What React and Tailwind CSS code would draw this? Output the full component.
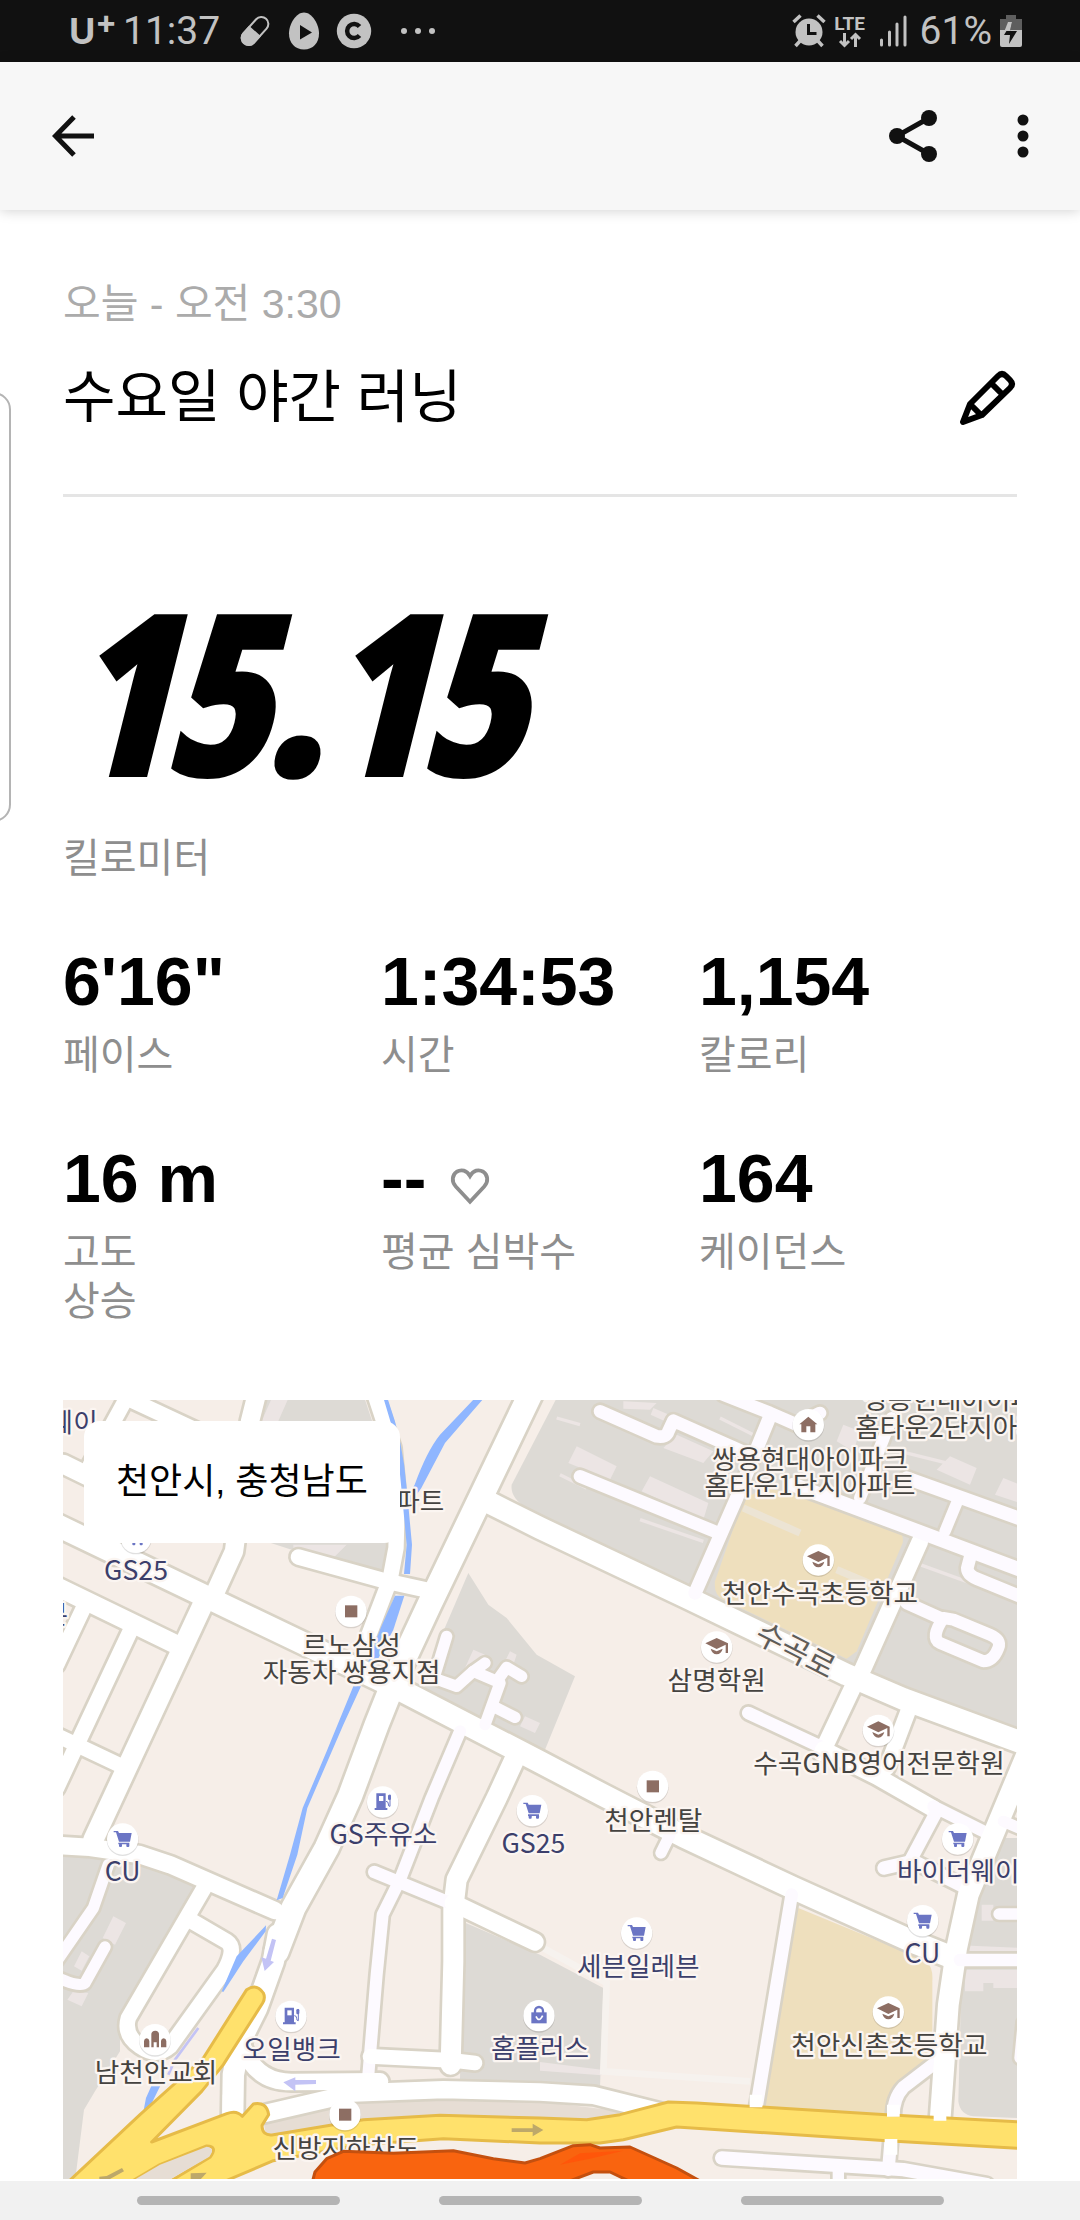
import React from "react";

const STATS = [
  { value: "6'16\"", label: "페이스" },
  { value: "1:34:53", label: "시간" },
  { value: "1,154", label: "칼로리" },
  { value: "16 m", label: "고도 상승", narrow: true },
  { value: "--", label: "평균 심박수", heart: true },
  { value: "164", label: "케이던스" },
];

function StatusBar() {
  return (
    <div className="flex h-[62px] items-center justify-between bg-[#111111] pl-[69px] pr-[58px] font-['Roboto',sans-serif] text-[39px] leading-[62px] text-[#c2c2c2]">
      <div className="flex items-center">
        <span className="flex w-[54px] items-start font-['Inter',sans-serif] text-[36px] font-bold leading-[42px]">
          U<span className="text-[32px] leading-[24px]">+</span>
        </span>
        <span>11:37</span>
        <svg className="ml-[18px] h-[34px] w-[34px]" viewBox="0 0 34 34" aria-hidden="true">
          <g transform="rotate(42 17 17)">
            <rect x="10" y="0.5" width="14" height="33" rx="7" fill="none" stroke="#c2c2c2" strokeWidth="2" />
            <path d="M9 17h16v10a8 7 0 0 1-16 0z" fill="#c2c2c2" />
          </g>
        </svg>
        <svg className="ml-4 h-[38px] w-[32px]" viewBox="0 0 32 38" aria-hidden="true">
          <path d="M16 .5C24 .5 31 12 31 21.500S25 37.500 16 37.500 1 31 1 21.500 8 .5 16 .5z" fill="#c2c2c2" />
          <path d="M12 13l12 7.500-12 7z" fill="#111" />
        </svg>
        <svg className="ml-4 h-[36px] w-[36px]" viewBox="0 0 36 36" aria-hidden="true">
          <circle cx="18" cy="18" r="17.200" fill="#c2c2c2" />
          <path d="M23.500 13.500a7 7 0 1 0 0 9" fill="none" stroke="#111" strokeWidth="4.500" />
        </svg>
        <svg className="ml-[28px] h-2 w-[36px]" viewBox="0 0 36 8" aria-hidden="true">
          <g fill="#c2c2c2">
            <circle cx="4" cy="4" r="3" />
            <circle cx="18" cy="4" r="3" />
            <circle cx="32" cy="4" r="3" />
          </g>
        </svg>
      </div>
      <div className="flex items-center">
        <svg className="h-[34px] w-[34px]" viewBox="0 0 34 34" aria-hidden="true">
          <circle cx="17" cy="18" r="13.500" fill="#c2c2c2" />
          <path d="M1.500 8l7-6.500M32.500 8l-7-6.500M8 27l-4.500 5M26 27l4.500 5" stroke="#c2c2c2" strokeWidth="3.500" />
          <path d="M16.500 10v9.500h8" fill="none" stroke="#111" strokeWidth="3" />
        </svg>
        <div className="ml-2 flex w-[32px] flex-col items-center">
          <span className="text-[19px] font-bold leading-[17px]">LTE</span>
          <svg className="h-[16px] w-[24px]" viewBox="0 0 24 16" aria-hidden="true">
            <path d="M6.500 1v12M2 9l4.500 4.500L11 9M17.500 15V3M13 7l4.500-4.500L22 7" fill="none" stroke="#c2c2c2" strokeWidth="3" />
          </svg>
        </div>
        <svg className="ml-3 h-[32px] w-[30px]" viewBox="0 0 30 32" aria-hidden="true">
          <path d="M3.500 25v5M11.500 17v13M19 9v21M27 2v28" stroke="#c2c2c2" strokeWidth="3" strokeLinecap="round" />
        </svg>
        <span className="ml-3">61%</span>
        <svg className="ml-2 h-[34px] w-[22px]" viewBox="0 0 22 34" aria-hidden="true">
          <path d="M6 1h10v4h6v11H0V5h6z" fill="#5e5e5e" />
          <path d="M0 16h22v15a2 2 0 0 1-2 2H2a2 2 0 0 1-2-2z" fill="#c2c2c2" />
          <path d="M12 8l-2 9h7l-8 13 1-9H4z" fill="#111" />
          <path d="M12 8l-2 9H4.500L8 8z" fill="#c2c2c2" />
        </svg>
      </div>
    </div>
  );
}

function AppBar() {
  return (
    <header className="relative flex h-[148px] items-center justify-between bg-[#f7f7f7] pl-[50px] pr-[45px] shadow-[0_1px_12px_rgba(0,0,0,0.18)]">
      <button type="button" aria-label="뒤로">
        <svg className="h-12 w-12" viewBox="0 0 48 48">
          <path d="M24 5L5.500 24 24 43M5.500 24H44" fill="none" stroke="#111" strokeWidth="5" />
        </svg>
      </button>
      <div className="flex items-center gap-[74px]">
        <button type="button" aria-label="공유">
          <svg className="h-[54px] w-12" viewBox="0 0 48 54">
            <path d="M40 9L8 27l32 18" fill="none" stroke="#111" strokeWidth="5" />
            <circle cx="40" cy="9" r="8" fill="#111" />
            <circle cx="8" cy="27" r="8" fill="#111" />
            <circle cx="40" cy="45" r="8" fill="#111" />
          </svg>
        </button>
        <button type="button" aria-label="더보기">
          <svg className="h-12 w-6" viewBox="0 0 24 48">
            <g fill="#111">
              <circle cx="12" cy="8" r="5.500" />
              <circle cx="12" cy="24" r="5.500" />
              <circle cx="12" cy="40" r="5.500" />
            </g>
          </svg>
        </button>
      </div>
    </header>
  );
}

/* Streets: [centre line, width, tint]. All outlines are drawn before all fills so junctions open up. */
const W = "#ffffff";
const L = "#fdfaff";
const ROADS = [
  ["M590 20L570 100 530 430 522 490 465 615", 55, W],
  ["M9 228L300 370", 56, W],
  ["M205 20L90 230", 44, W],
  ["M190 25L480 160", 46, W],
  ["M-10 411L450 632 1010 900 1440 1122 1630 1222 1870 1345 2200 1500 2560 1662 2680 1710", 66, W],
  ["M-10 596L345 768", 56, W],
  ["M440 625L277 975 100 1355", 60, W],
  ["M75 650L-10 830", 46, W],
  ["M215 720L60 1050 -10 1200", 46, W],
  ["M-10 1042L180 1132", 44, W],
  ["M1420 0L1108 650 1010 860 950 1010 870 1225 800 1380 700 1560 650 1690", 72, W],
  ["M945 20L998 180 1012 330 1008 480 990 575 925 745", 46, W],
  ["M715 507L980 580 1110 608", 46, W],
  ["M1290 345L1440 420 1880 628 2360 860 2530 933 2880 1062", 65, W],
  ["M1200 1030L1115 1230 1020 1475 968 1580 950 1760 925 2060", 36, L],
  ["M1370 1100L1310 1230 1190 1475 1180 1560 1180 1720 1172 2030", 60, W],
  ["M943 1452L1170 1545", 38, L],
  ["M1180 1545L1425 1662", 52, W],
  ["M930 2005L1175 2017 1245 2025", 44, W],
  ["M655 1640L640 1720 590 1860 540 1960 520 2060 518 2185", 64, W],
  ["M550 1980Q590 2085 700 2082L960 2080", 50, W],
  ["M600 2180L880 2115 1150 2105 1440 2112 1600 2122 1800 2172", 52, W],
  ["M-10 1372L90 1378 240 1400 330 1430 645 1568", 52, W],
  ["M435 1495L205 1890Q190 1940 240 1975 290 2010 330 1975L495 1745Q530 1680 500 1660L400 1602", 46, W],
  ["M145 1430L100 1560 -10 1720", 34, L],
  ["M135 1677L75 1785Q60 1800 -10 1768", 34, L],
  ["M2195 1520L2088 2165", 38, L],
  ["M2625 2025L2530 2098Q2500 2130 2500 2185", 38, L],
  ["M2493 2250L2485 2345", 38, L],
  ["M1985 2310L2530 2345 2780 2390", 40, L],
  ["M2335 2345V2390", 34, L],
  ["M2580 460L2410 840 2375 905 2285 1095", 50, W],
  ["M2550 955L2480 1140", 46, W],
  ["M2065 975L2290 1080", 38, L],
  ["M2290 1085L2450 1165 2620 1262", 50, W],
  ["M2620 1255L2790 1340", 36, L],
  ["M2630 1270L2550 1420", 38, L],
  ["M2472 1440L2560 1420 2710 1495", 40, L],
  ["M2900 1100L2812 1310 2725 1520 2690 1680 2665 1850 2640 2200", 62, W],
  ["M2830 1300L2890 1325", 34, L],
  ["M1830 1340L1803 1395", 34, L],
  ["M2817 1578H2890", 34, L],
  ["M2700 1716H2890", 38, L],
  ["M2890 1905L2880 2010", 34, L],
  ["M1160 745L1125 860", 34, L],
  ["M1120 870L1190 895 1240 850 1275 825", 34, L],
  ["M1240 850L1310 880 1340 838 1385 865", 34, L],
  ["M1320 885L1275 1010", 34, L],
  ["M1300 955L1365 988", 34, L],
  ["M1620 70L1790 145Q1820 150 1825 130L1840 98 2080 205", 38, L],
  ["M1560 265L1975 435", 38, L],
  ["M2130 85L2030 330 1905 615", 40, L],
  ["M1990 20L2130 75 2210 110 2280 75", 38, L],
  ["M2495 90L2400 330", 36, L],
  ["M2200 290L2580 432 2880 545", 42, L],
  ["M2540 270L2880 392", 40, L],
  ["M2690 345L2655 430", 34, L],
  ["M2735 490L2722 540Q2722 560 2750 572L2880 625", 38, L],
  ["M2540 645L2640 690", 38, L],
  ["M2650 690Q2610 750 2640 765L2770 820Q2800 820 2815 780 2825 755 2790 740L2680 695Z", 36, L],
];

const HALO = "#fbf5f1";
const BROWN = "#8d6e63";
const BLUE = "#6b75c4";

const LABELS = [
  ["웨이", 113, 132, "end", "b"],
  ["본", 24, 708, "end", "b"],
  ["GS25", 228, 575, "middle", "b"],
  ["파트", 1153, 370, "end", "d"],
  ["르노삼성", 875, 800, "middle", "d"],
  ["자동차 쌍용지점", 875, 881, "middle", "d"],
  ["쌍용현대아이파크", 2410, 64, "start", "d"],
  ["홈타운2단지아파트", 2386, 146, "start", "d"],
  ["쌍용현대아이파크", 2250, 242, "middle", "d"],
  ["홈타운1단지아파트", 2250, 320, "middle", "d"],
  ["천안수곡초등학교", 2280, 646, "middle", "d"],
  ["삼명학원", 1970, 906, "middle", "d"],
  ["수곡GNB영어전문학원", 2457, 1156, "middle", "d"],
  ["천안렌탈", 1780, 1325, "middle", "d"],
  ["CU", 188, 1478, "middle", "b"],
  ["GS주유소", 970, 1369, "middle", "b"],
  ["GS25", 1420, 1395, "middle", "b"],
  ["바이더웨이", 2511, 1480, "start", "b"],
  ["CU", 2587, 1726, "middle", "b"],
  ["세븐일레븐", 1735, 1764, "middle", "b"],
  ["홈플러스", 1440, 2010, "middle", "b"],
  ["천안신촌초등학교", 2488, 2002, "middle", "d"],
  ["오일뱅크", 695, 2012, "middle", "b"],
  ["남천안교회", 288, 2083, "middle", "d"],
  ["신방지하차도", 858, 2311, "middle", "d"],
];

const PINS = [
  ["cart", 228, 448],
  ["square", 873, 670],
  ["square", 1778, 1195],
  ["square", 855, 2180],
  ["home", 2245, 110],
  ["grad", 2275, 516],
  ["grad", 1970, 777],
  ["grad", 2455, 1027],
  ["grad", 2485, 1872],
  ["cart", 188, 1353],
  ["cart", 1417, 1268],
  ["cart", 2693, 1353],
  ["cart", 2588, 1598],
  ["cart", 1730, 1635],
  ["fuel", 968, 1242],
  ["fuel", 693, 1885],
  ["bag", 1437, 1883],
  ["church", 285, 1955],
];

function Glyph({ kind }) {
  switch (kind) {
    case "square":
      return <rect x="-18" y="-18" width="37" height="36" fill={BROWN} />;
    case "home":
      return <path d="M0-24l27 23h-6v24H6V5H-6v18h-15V-1h-6z" fill={BROWN} />;
    case "grad":
      return (
        <g fill={BROWN}>
          <path d="M-34-11L0-27 34-11V18H27V-7L0 6z" />
          <path d="M-18 5L0 13 18 5Q14 21 0 22-14 21-18 5z" />
        </g>
      );
    case "cart":
      return (
        <g fill={BLUE}>
          <path d="M-27-24h13l3 6h38l-5 26h-33l-9-28h-7zM-13 11h33v5h-33z" />
          <rect x="-11" y="14" width="9" height="10" rx="3" />
          <rect x="11" y="14" width="9" height="10" rx="3" />
        </g>
      );
    case "fuel":
      return (
        <g>
          <path d="M-19-26H9V18h5v6h-38v-6h5z" fill={BLUE} />
          <rect x="-11" y="-18" width="13" height="15" fill="#fff" />
          <path d="M10-2q7 0 7 8t5 7V-22" fill="none" stroke={BLUE} strokeWidth="3" />
          <rect x="16" y="-22" width="9" height="16" rx="4" fill={BLUE} />
        </g>
      );
    case "bag":
      return (
        <g>
          <path d="M-12-8v-6a12 12 0 0 1 24 0v6" fill="none" stroke={BLUE} strokeWidth="7" />
          <path d="M-23-10h46v33h-46z" fill={BLUE} />
          <path d="M-9 2Q0 22 11 0" fill="none" stroke="#fff" strokeWidth="5" />
        </g>
      );
    default:
      return (
        <path
          d="M-11-16Q-11-26 1-27 12-26 12-16V23H5V8H-4V23H-11zM-33 4Q-32-4-25-4T-17 4V23H-33zM18 4Q19-4 26-4T34 4V23H18z"
          fill={BROWN}
        />
      );
  }
}

function RouteMap() {
  return (
    <svg className="block h-auto w-full" viewBox="9 36 2862 2337" role="img" aria-label="러닝 경로 지도">
      <rect width="2900" height="2400" fill="#f6eee8" />

      <g fill="#dddad5">
        <path d="M618 20H910L940 110H595zM555 440H1000L970 552 830 510 690 484z" />
        <path d="M1225 555L1285 650 1340 690 1430 800 1545 865 1455 1085 1090 905 1150 730z" />
        <path d="M1490 30H2880V1030L2430 862 1400 360Q1350 330 1355 290z" />
        <path d="M1205 1600L1440 1700 1630 1800 1620 2100 1200 2075z" />
        <path d="M-10 1398L85 1405 250 1430 420 1500 180 1900V1990L105 2110 72 2165 45 2380H-10z" />
        <path d="M2800 1350H2880V1690H2720zM2705 1740H2880V2190L2740 2185Q2700 2180 2695 2140z" />
      </g>
      <g fill="#ece5e4">
        <path d="M640 20H690L650 110H600zM700 470H860L820 510H700z" />
        <path d="M1550 175L1670 235 1650 275 1525 225zM1770 265L1945 345 1930 395 1745 310zM1850 140L1960 190 1930 225 1810 180z" />
        <path d="M1690 40L1790 45 1770 65 1690 62zM1780 60L1850 90 1838 110 1772 80z" />
        <path d="M2670 205L2750 240 2730 290 2630 245zM2830 270L2880 290V345L2805 320zM2350 110L2400 130 2380 190 2330 160z" />
        <path d="M1240 785L1275 800 1260 840 1215 840zM1350 790L1370 800 1360 830 1335 820zM1395 985L1440 1005 1425 1035 1380 1015z" />
        <path d="M160 1585L198 1605 165 1670 128 1650zM65 1690L88 1705 65 1748 42 1735zM40 1810L85 1815 65 1855 22 1835z" />
        <path d="M2715 1745H2871V1800H2800V1785H2770V1810H2715zM1440 2022L1625 2045V2062L1440 2048z" />
        <path d="M2765 1550H2800V1598H2765zM2700 1672L2880 1680V1695H2700z" />
      </g>
      <path d="M1490 90L1560 110M1500 260L1580 300M1740 395L1930 460M1980 90L2080 140M2580 530L2871 635M2520 190L2680 230" stroke="#ece5e4" strokeWidth="10" fill="none" />
      <path d="M1450 1680L1640 1785 1630 2050 2070 2080" fill="none" stroke="#f6f2ee" strokeWidth="20" />

      <g fill="#eedfbd">
        <path d="M2050 335L2110 300 2280 328 2515 425Q2532 440 2528 465L2390 790 2360 812 1990 635Q1960 620 1965 580z" />
        <path d="M2215 1560L2530 1690 2600 1720Q2620 1740 2617 1780V2010L2530 2080 2485 2178 2105 2155z" />
      </g>
      <path d="M2050 360L2220 435M2330 545L2460 600" stroke="#ece4d4" strokeWidth="22" />
      <path d="M610 2200L905 2140 1150 2130 1440 2140 1720 2175 1680 2200 905 2210 620 2250z" fill="#e6ddd4" />

      <g fill="none" stroke="#d9d3c6" strokeLinejoin="round" strokeLinecap="round">
        {ROADS.map(([d, w]) => (
          <path key={d} d={d} strokeWidth={w + 16} />
        ))}
      </g>
      <g fill="none" strokeLinejoin="round" strokeLinecap="round">
        {ROADS.map(([d, w, c]) => (
          <path key={d} d={d} strokeWidth={w} stroke={c} />
        ))}
      </g>

      <g fill="#8fb6ff">
        <path d="M970 30H982Q1030 160 1040 300L1056 470 1050 558H1032L1040 470 1026 320Q1015 160 970 30z" />
        <path d="M1245 30H1272Q1220 90 1155 165L1084 300 1048 350 1040 330 1064 290Q1100 190 1140 140z" />
        <path d="M1005 623H1033L1000 725 945 830 925 820 962 720z" />
        <path d="M880 895H903L850 1010 742 1260 712 1400 668 1530 650 1537 690 1400 728 1260 800 1090z" />
        <path d="M618 1612L617 1630 550 1720 490 1812 485 1810 530 1705z" />
        <path d="M278 2085H305L278 2140 268 2165 248 2182 258 2130z" />
      </g>
      <path d="M415 1920L345 2015 325 2060" fill="none" stroke="#c3c3f5" strokeWidth="8" />

      <path
        d="M20 2386L240 2180 430 2010 560 1805Q590 1785 610 1815 617 1830 608 1845L490 2030 425 2110 275 2262 500 2177Q530 2165 547 2185L580 2148Q620 2140 626 2180L606 2212Q606 2245 640 2240L910 2195 1140 2182 1440 2190 1580 2195 1680 2180 1825 2142 1910 2145 2480 2180 2890 2202V2282L2480 2258 1850 2217 1690 2255 1620 2265 1440 2265 1150 2252 900 2270 640 2318 480 2386H320L450 2308Q475 2275 440 2274L300 2330 205 2386z"
        fill="#ffe16c"
        stroke="#e6bb48"
        strokeWidth="9"
        strokeLinejoin="round"
      />
      <path d="M205 2386L300 2330 440 2276Q468 2280 448 2306L310 2386z" fill="#e6ddd4" />
      <path d="M2088 2120V2158M2500 2150V2186M2640 2120V2198M2493 2253V2300" stroke="#fff" strokeWidth="38" />
      <path d="M518 2120V2166" stroke="#fff" strokeWidth="60" />

      <g fill="#c3c3f5">
        <path d="M636 1652L648 1656 632 1718 642 1722 614 1749 604 1708 618 1712z" />
        <path d="M768 2076V2088L706 2090V2110L670 2083 706 2068V2076z" />
      </g>
      <g fill="#bda86a">
        <path d="M1355 2221H1418V2207L1450 2226 1418 2245V2232H1355z" />
        <path d="M186 2340L192 2350 150 2373H118V2366L140 2364z" />
        <path d="M392 2356L440 2354 420 2376H392z" />
      </g>

      {PINS.map(([kind, x, y]) => (
        <g key={`${kind}-${x}`} transform={`translate(${x} ${y})`}>
          <circle cy="3" r="48" fill="#000" opacity="0.12" />
          <circle r="47" fill="#fff" />
          <Glyph kind={kind} />
        </g>
      ))}

      <g
        className="font-['Noto_Sans_CJK_KR',sans-serif] text-[80px]"
        stroke={HALO}
        strokeWidth="14"
        strokeLinejoin="round"
        paintOrder="stroke"
      >
        {LABELS.map(([text, x, y, anchor, tone]) => (
          <text key={`${text}-${x}-${y}`} x={x} y={y} textAnchor={anchor} fill={tone === "b" ? "#3c3f6b" : "#454340"}>
            {text}
          </text>
        ))}
        <text textAnchor="middle" transform="translate(2192 816) rotate(27)" className="text-[92px]" fill="#5f5c58">
          수곡로
        </text>
      </g>

      <path
        d="M755 2390L765 2352 800 2312 850 2290 1000 2296 1180 2288 1300 2312 1395 2325 1440 2312 1540 2273 1590 2270 1620 2280 1710 2277 1850 2340 1940 2390H1730L1650 2352 1600 2352 1500 2390z"
        fill="#f9640f"
        stroke="#c4500f"
        strokeWidth="9"
        strokeLinejoin="round"
      />
      <path d="M1500 2330L1560 2296 1690 2288 1590 2312z" fill="#ff560a" />
    </svg>
  );
}

function Stat({ value, label, heart, narrow }) {
  return (
    <div>
      <dd className="flex items-center gap-6 text-[68px] font-bold leading-[72px] text-black">
        {value}
        {heart && (
          <svg className="mt-4 h-[38px] w-10" viewBox="0 0 42 40" aria-hidden="true">
            <path
              d="M21 36.500L6 20.500C1 15 2.500 8 7 5 12 2 17.500 3.500 21 9.500 24.500 3.500 30 2 35 5c4.500 3 6 10 1 15.500z"
              fill="none"
              stroke="#8e8e8e"
              strokeWidth="4"
            />
          </svg>
        )}
      </dd>
      <dt className={`mt-[14px] text-[40px] leading-[49px] text-[#8e8e8e] ${narrow ? "w-24" : ""}`}>{label}</dt>
    </div>
  );
}

export default function App() {
  return (
    <div className="relative flex min-h-screen flex-col overflow-hidden bg-white font-['Liberation_Sans','Noto_Sans_CJK_KR',sans-serif]">
      <StatusBar />
      <AppBar />
      <div className="absolute -left-6 top-[392px] h-[430px] w-[35px] rounded-[20px] border-2 border-[#b4b4b4]" />

      <main className="flex-1 px-[63px] pt-[70px]">
        <p className="text-[41px] leading-[48px] text-[#ababab]">오늘 - 오전 3:30</p>
        <div className="mt-9 flex items-center justify-between border-b-[3px] border-[#e5e5e5] pb-[64px]">
          <h1 className="text-[57px] leading-[66px] text-black">수요일 야간 러닝</h1>
          <button type="button" aria-label="제목 편집">
            <svg className="h-[60px] w-[60px]" viewBox="0 0 60 60">
              <path
                d="M6 55l7-18L41 9q4-4 8 0l4 4q4 4 0 8L25 48zM34 16l12 12M13 37l11 11"
                fill="none"
                stroke="#000"
                strokeWidth="6"
                strokeLinejoin="round"
              />
            </svg>
          </button>
        </div>

        <p className="mt-28 pl-1 font-['Open_Sans_Condensed','Open_Sans',sans-serif] text-[214px] font-black italic leading-[160px] text-black [-webkit-text-stroke:10px_#000]">
          15.15
        </p>
        <p className="mt-[65px] text-[40px] leading-[48px] text-[#8e8e8e]">킬로미터</p>

        <dl className="mt-[63px] grid grid-cols-3 gap-y-[62px]">
          {STATS.map((s) => (
            <Stat key={s.label} {...s} />
          ))}
        </dl>

        <section className="relative mt-[74px]">
          <RouteMap />
          <div className="absolute left-[21px] top-[21px] rounded-[16px] bg-white px-[32px] py-[37px] text-[36px] leading-[48px] text-black">
            천안시, 충청남도
          </div>
        </section>
      </main>

      <nav className="flex h-[39px] items-center justify-center gap-[99px] bg-[#f1f1f1]" aria-label="시스템 탐색">
        <button type="button" aria-label="최근 앱" className="h-[9px] w-[203px] rounded-full bg-[#b4b4b4]" />
        <button type="button" aria-label="홈" className="h-[9px] w-[203px] rounded-full bg-[#b4b4b4]" />
        <button type="button" aria-label="이전" className="h-[9px] w-[203px] rounded-full bg-[#b4b4b4]" />
      </nav>
    </div>
  );
}
